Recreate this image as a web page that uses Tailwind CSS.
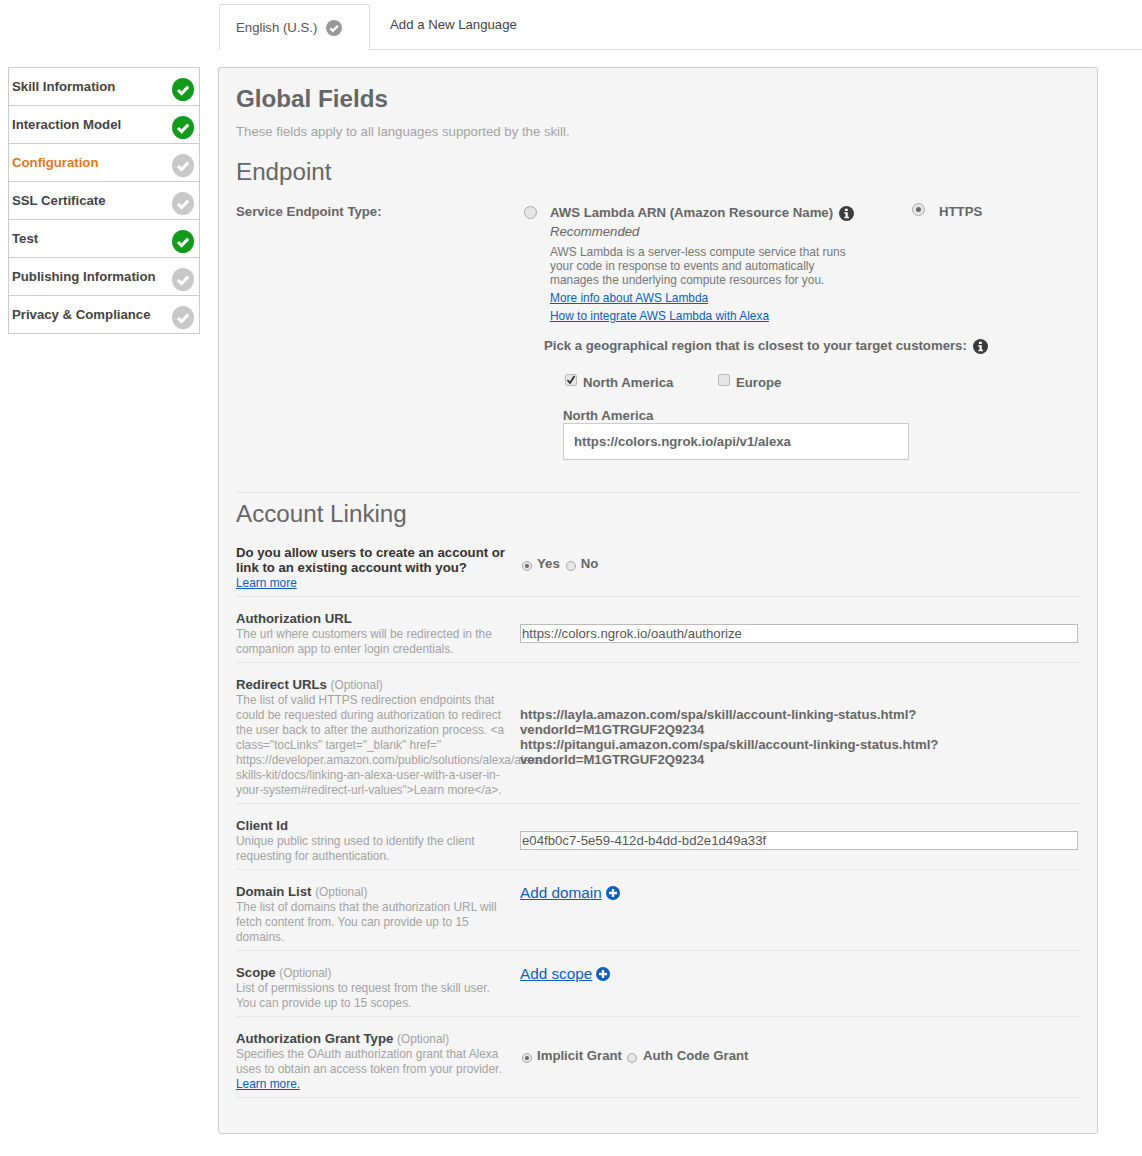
<!DOCTYPE html>
<html lang="en">
<head>
    <meta charset="UTF-8">
    <title>Alexa Skill Configuration</title>
    <script src="https://cdn.jsdelivr.net/npm/@tailwindcss/browser@4"></script>
</head>
<body class="bg-white font-['Liberation_Sans',Arial,sans-serif] text-[#444] pt-1 pb-[22px]">
    <!-- language tabs -->
    <div class="flex h-[46px] ml-[219px] border-b border-[#ddd]">
        <div class="flex items-center w-[151px] h-[46px] pl-[16px] bg-white border border-b-0 border-[#ddd] rounded-t-[3px] text-[13.200px] text-[#555]">
            English (U.S.)
            <svg class="w-4 h-4 ml-[9px]" viewBox="0 0 24 24"><circle cx="12" cy="12" r="12" fill="#999"/><path d="M6.500 12.500l3.800 3.800 7.500-7.800" fill="none" stroke="#fff" stroke-width="3.400"/></svg>
        </div>
        <div class="pl-5 pt-[11px] text-[13.200px] text-[#444]">Add a New Language</div>
    </div>

    <div class="flex items-start mt-[17px] pl-2">
        <!-- steps -->
        <ul class="w-[192px] border border-[#ccc] text-[13.200px] font-bold">
            <li class="flex justify-between h-[38px] pl-[3px] pr-[5px] pt-[9px] border-b border-[#ccc]">Skill Information
                <svg class="w-[22px] h-[23px] mt-[1px]" viewBox="0 0 22 23"><ellipse cx="11" cy="11.500" rx="11" ry="11.500" fill="#129a1a"/><path d="M6 12l3.600 3.600 6.600-7" fill="none" stroke="#fff" stroke-width="3"/></svg></li>
            <li class="flex justify-between h-[38px] pl-[3px] pr-[5px] pt-[9px] border-b border-[#ccc]">Interaction Model
                <svg class="w-[22px] h-[23px] mt-[1px]" viewBox="0 0 22 23"><ellipse cx="11" cy="11.500" rx="11" ry="11.500" fill="#129a1a"/><path d="M6 12l3.600 3.600 6.600-7" fill="none" stroke="#fff" stroke-width="3"/></svg></li>
            <li class="flex justify-between h-[38px] pl-[3px] pr-[5px] pt-[9px] border-b border-[#ccc] text-[#e47911]">Configuration
                <svg class="w-[22px] h-[23px] mt-[1px]" viewBox="0 0 22 23"><ellipse cx="11" cy="11.500" rx="11" ry="11.500" fill="#c8c8c8"/><path d="M6 12l3.600 3.600 6.600-7" fill="none" stroke="#fff" stroke-width="3"/></svg></li>
            <li class="flex justify-between h-[38px] pl-[3px] pr-[5px] pt-[9px] border-b border-[#ccc]">SSL Certificate
                <svg class="w-[22px] h-[23px] mt-[1px]" viewBox="0 0 22 23"><ellipse cx="11" cy="11.500" rx="11" ry="11.500" fill="#c8c8c8"/><path d="M6 12l3.600 3.600 6.600-7" fill="none" stroke="#fff" stroke-width="3"/></svg></li>
            <li class="flex justify-between h-[38px] pl-[3px] pr-[5px] pt-[9px] border-b border-[#ccc]">Test
                <svg class="w-[22px] h-[23px] mt-[1px]" viewBox="0 0 22 23"><ellipse cx="11" cy="11.500" rx="11" ry="11.500" fill="#129a1a"/><path d="M6 12l3.600 3.600 6.600-7" fill="none" stroke="#fff" stroke-width="3"/></svg></li>
            <li class="flex justify-between h-[38px] pl-[3px] pr-[5px] pt-[9px] border-b border-[#ccc]">Publishing Information
                <svg class="w-[22px] h-[23px] mt-[1px]" viewBox="0 0 22 23"><ellipse cx="11" cy="11.500" rx="11" ry="11.500" fill="#c8c8c8"/><path d="M6 12l3.600 3.600 6.600-7" fill="none" stroke="#fff" stroke-width="3"/></svg></li>
            <li class="flex justify-between h-[37px] pl-[3px] pr-[5px] pt-[9px]">Privacy &amp; Compliance
                <svg class="w-[22px] h-[23px] mt-[1px]" viewBox="0 0 22 23"><ellipse cx="11" cy="11.500" rx="11" ry="11.500" fill="#c8c8c8"/><path d="M6 12l3.600 3.600 6.600-7" fill="none" stroke="#fff" stroke-width="3"/></svg></li>
        </ul>

        <!-- form panel -->
        <div class="w-[880px] h-[1067px] ml-[18px] pl-[17px] pr-[17px] bg-[#f5f5f5] border border-[#ccc] rounded-[3px]">
            <h1 class="mt-[16px] text-[24.200px] leading-[30px] font-bold text-[#666]">Global Fields</h1>
            <p class="mt-[10px] text-[13.200px] leading-[15px] text-[#a3a3a3]">These fields apply to all languages supported by the skill.</p>
            <h2 class="mt-[18px] text-[24.200px] leading-[30px] text-[#666]">Endpoint</h2>

            <div class="flex mt-[17px] text-[13.200px] text-[#666] h-[288px]">
                <div class="w-[288px] font-bold leading-[15px]">Service Endpoint Type:</div>
                <div>
                    <div class="flex">
                        <span class="w-[13px] h-[13px] mt-[2px] rounded-full bg-[#e6e6e6] border border-[#aaa]"></span>
                        <div class="w-[362px] ml-[13px]">
                            <div class="flex items-center font-bold leading-[17px]">AWS Lambda ARN (Amazon Resource Name)
                                <svg class="w-[15px] h-[15px] ml-[6px] mt-[2px]" viewBox="0 0 24 24"><circle cx="12" cy="12" r="12" fill="#3d3d3d"/><path d="M9.500 4.500h4.500v3.500h-4.500zM8.500 10h5.500v7h2v2.500h-7.500v-2.500h2v-4.500h-2z" fill="#fff"/></svg>
                            </div>
                            <div class="mt-[3px] italic leading-[15px]">Recommended</div>
                            <p class="mt-[6px] w-[300px] text-[11.900px] leading-[14px] text-[#777]">AWS Lambda is a server-less compute service that runs your code in response to events and automatically manages the underlying compute resources for you.</p>
                            <a href="#" class="block mt-[4px] text-[11.900px] leading-[15px] text-[#0a5fc0] underline">More info about AWS Lambda</a>
                            <a href="#" class="block mt-[3px] text-[11.900px] leading-[15px] text-[#0a5fc0] underline">How to integrate AWS Lambda with Alexa</a>
                        </div>
                        <span class="flex items-center justify-center w-[13px] h-[13px] mt-[-1px] rounded-full bg-[#e6e6e6] border border-[#aaa]"><span class="w-[5px] h-[5px] rounded-full bg-[#666]"></span></span>
                        <span class="ml-[14px] mt-[-1px] font-bold leading-[17px]">HTTPS</span>
                    </div>
                    <div class="flex items-center mt-[13px] ml-[20px] font-bold leading-[17px]">Pick a geographical region that is closest to your target customers:
                        <svg class="w-[15px] h-[15px] ml-[6px] mt-[2px]" viewBox="0 0 24 24"><circle cx="12" cy="12" r="12" fill="#3d3d3d"/><path d="M9.500 4.500h4.500v3.500h-4.500zM8.500 10h5.500v7h2v2.500h-7.500v-2.500h2v-4.500h-2z" fill="#fff"/></svg>
                    </div>
                    <div class="flex mt-[21px] ml-[41px] font-bold leading-[15px]">
                        <span class="flex items-center justify-center w-3 h-3 mt-[-1px] rounded-[2px] bg-[#e6e6e6] border border-[#bbb]">
                            <svg class="w-[10px] h-[10px]" viewBox="0 0 10 10"><path d="M1.500 5l2.500 3 4.500-7" fill="none" stroke="#333" stroke-width="1.800"/></svg>
                        </span>
                        <span class="ml-[6px] w-[135px]">North America</span>
                        <span class="w-3 h-3 mt-[-1px] rounded-[2px] bg-[#e6e6e6] border border-[#bbb]"></span>
                        <span class="ml-[6px]">Europe</span>
                    </div>
                    <div class="mt-[18px] ml-[39px] font-bold leading-[15px]">North America</div>
                    <input type="text" value="https://colors.ngrok.io/api/v1/alexa" class="block w-[346px] h-[37px] ml-[39px] px-[10px] bg-white border border-[#ccc] text-[13.200px] font-bold text-[#666]">
                </div>
            </div>

            <div class="border-t border-[#e6e6e6]"></div>
            <h2 class="mt-[6px] text-[24.200px] leading-[30px] text-[#666]">Account Linking</h2>

            <div class="flex mt-[16px] pb-[5px] border-b border-[#e6e6e6]">
                <div class="w-[284px]">
                    <div class="w-[274px] text-[13.200px] leading-[15px] font-bold text-[#333]">Do you allow users to create an account or link to an existing account with you?</div>
                    <a href="#" class="block mt-[1px] text-[11.900px] leading-[15px] text-[#0a5fc0] underline">Learn more</a>
                </div>
                <div class="flex pt-[11px] h-[30px] text-[13.200px] leading-[15px] font-bold text-[#666]">
                    <span class="flex items-center justify-center w-[10px] h-[10px] mt-[5px] ml-[2px] rounded-full bg-[#e6e6e6] border border-[#aaa]"><span class="w-1 h-1 rounded-full bg-[#666]"></span></span>
                    <span class="ml-[5px]">Yes</span>
                    <span class="w-[10px] h-[10px] mt-[5px] ml-[6px] rounded-full bg-[#e6e6e6] border border-[#aaa]"></span>
                    <span class="ml-[5px]">No</span>
                </div>
            </div>

            <div class="flex mt-[14px] pb-[5px] border-b border-[#e6e6e6]">
                <div class="w-[284px]">
                    <div class="text-[13.200px] leading-[15px] font-bold text-[#444]">Authorization URL</div>
                    <p class="w-[270px] mt-[1px] text-[11.900px] leading-[15px] text-[#a3a3a3]">The url where customers will be redirected in the companion app to enter login credentials.</p>
                </div>
                <input type="text" value="https://colors.ngrok.io/oauth/authorize" class="w-[558px] h-[19px] mt-[13px] px-[1px] bg-white border border-[#bbb] text-[13.200px] text-[#555]">
            </div>

            <div class="flex mt-[14px] pb-[5px] border-b border-[#e6e6e6]">
                <div class="w-[284px]">
                    <div class="text-[13.200px] leading-[15px] font-bold text-[#444]">Redirect URLs <span class="text-[11.900px] font-normal text-[#a3a3a3]">(Optional)</span></div>
                    <p class="w-[270px] text-[11.900px] leading-[15px] text-[#a3a3a3]">The list of valid HTTPS redirection endpoints that could be requested during authorization to redirect the user back to after the authorization process. &lt;a class="tocLinks" target="_blank" href=" https://developer.amazon.com/public/solutions/alexa/alexa-skills-kit/docs/linking-an-alexa-user-with-a-user-in-your-system#redirect-url-values"&gt;Learn more&lt;/a&gt;.</p>
                </div>
                <div class="relative pt-[30px] text-[13.200px] leading-[15px] font-bold text-[#666]">
                    https://layla.amazon.com/spa/skill/account-linking-status.html?<br>vendorId=M1GTRGUF2Q9234<br>https://pitangui.amazon.com/spa/skill/account-linking-status.html?<br>vendorId=M1GTRGUF2Q9234
                </div>
            </div>

            <div class="flex mt-[14px] pb-[5px] border-b border-[#e6e6e6]">
                <div class="w-[284px]">
                    <div class="text-[13.200px] leading-[15px] font-bold text-[#444]">Client Id</div>
                    <p class="w-[270px] mt-[1px] text-[11.900px] leading-[15px] text-[#a3a3a3]">Unique public string used to identify the client requesting for authentication.</p>
                </div>
                <input type="text" value="e04fb0c7-5e59-412d-b4dd-bd2e1d49a33f" class="w-[558px] h-[19px] mt-[13px] px-[1px] bg-white border border-[#bbb] text-[13.200px] text-[#555]">
            </div>

            <div class="flex mt-[14px] pb-[5px] border-b border-[#e6e6e6]">
                <div class="w-[284px]">
                    <div class="text-[13.200px] leading-[15px] font-bold text-[#444]">Domain List <span class="text-[11.900px] font-normal text-[#a3a3a3]">(Optional)</span></div>
                    <p class="w-[270px] text-[11.900px] leading-[15px] text-[#a3a3a3]">The list of domains that the authorization URL will fetch content from. You can provide up to 15 domains.</p>
                </div>
                <div class="flex items-center h-[18px]">
                    <a href="#" class="text-[15.300px] text-[#0a5fc0] underline">Add domain</a>
                    <svg class="w-[14px] h-[14px] ml-[4px]" viewBox="0 0 24 24"><circle cx="12" cy="12" r="12" fill="#0a5fc0"/><path d="M10 5h4v5h5v4h-5v5h-4v-5h-5v-4h5z" fill="#fff"/></svg>
                </div>
            </div>

            <div class="flex mt-[14px] pb-[5px] border-b border-[#e6e6e6]">
                <div class="w-[284px]">
                    <div class="text-[13.200px] leading-[15px] font-bold text-[#444]">Scope <span class="text-[11.900px] font-normal text-[#a3a3a3]">(Optional)</span></div>
                    <p class="w-[270px] text-[11.900px] leading-[15px] text-[#a3a3a3]">List of permissions to request from the skill user. You can provide up to 15 scopes.</p>
                </div>
                <div class="flex items-center h-[18px]">
                    <a href="#" class="text-[15.300px] text-[#0a5fc0] underline">Add scope</a>
                    <svg class="w-[14px] h-[14px] ml-[4px]" viewBox="0 0 24 24"><circle cx="12" cy="12" r="12" fill="#0a5fc0"/><path d="M10 5h4v5h5v4h-5v5h-4v-5h-5v-4h5z" fill="#fff"/></svg>
                </div>
            </div>

            <div class="flex mt-[14px] pb-[5px] border-b border-[#e6e6e6]">
                <div class="w-[284px]">
                    <div class="text-[13.200px] leading-[15px] font-bold text-[#444]">Authorization Grant Type <span class="text-[11.900px] font-normal text-[#a3a3a3]">(Optional)</span></div>
                    <p class="w-[270px] text-[11.900px] leading-[15px] text-[#a3a3a3]">Specifies the OAuth authorization grant that Alexa uses to obtain an access token from your provider.</p>
                    <a href="#" class="block text-[11.900px] leading-[15px] text-[#0a5fc0] underline">Learn more.</a>
                </div>
                <div class="flex pt-[17px] text-[13.200px] leading-[15px] font-bold text-[#666]">
                    <span class="flex items-center justify-center w-[10px] h-[10px] mt-[5px] ml-[2px] rounded-full bg-[#e6e6e6] border border-[#aaa]"><span class="w-1 h-1 rounded-full bg-[#666]"></span></span>
                    <span class="ml-[5px]">Implicit Grant</span>
                    <span class="w-[10px] h-[10px] mt-[5px] ml-[5px] rounded-full bg-[#e6e6e6] border border-[#aaa]"></span>
                    <span class="ml-[6px]">Auth Code Grant</span>
                </div>
            </div>
        </div>
    </div>
</body>
</html>
